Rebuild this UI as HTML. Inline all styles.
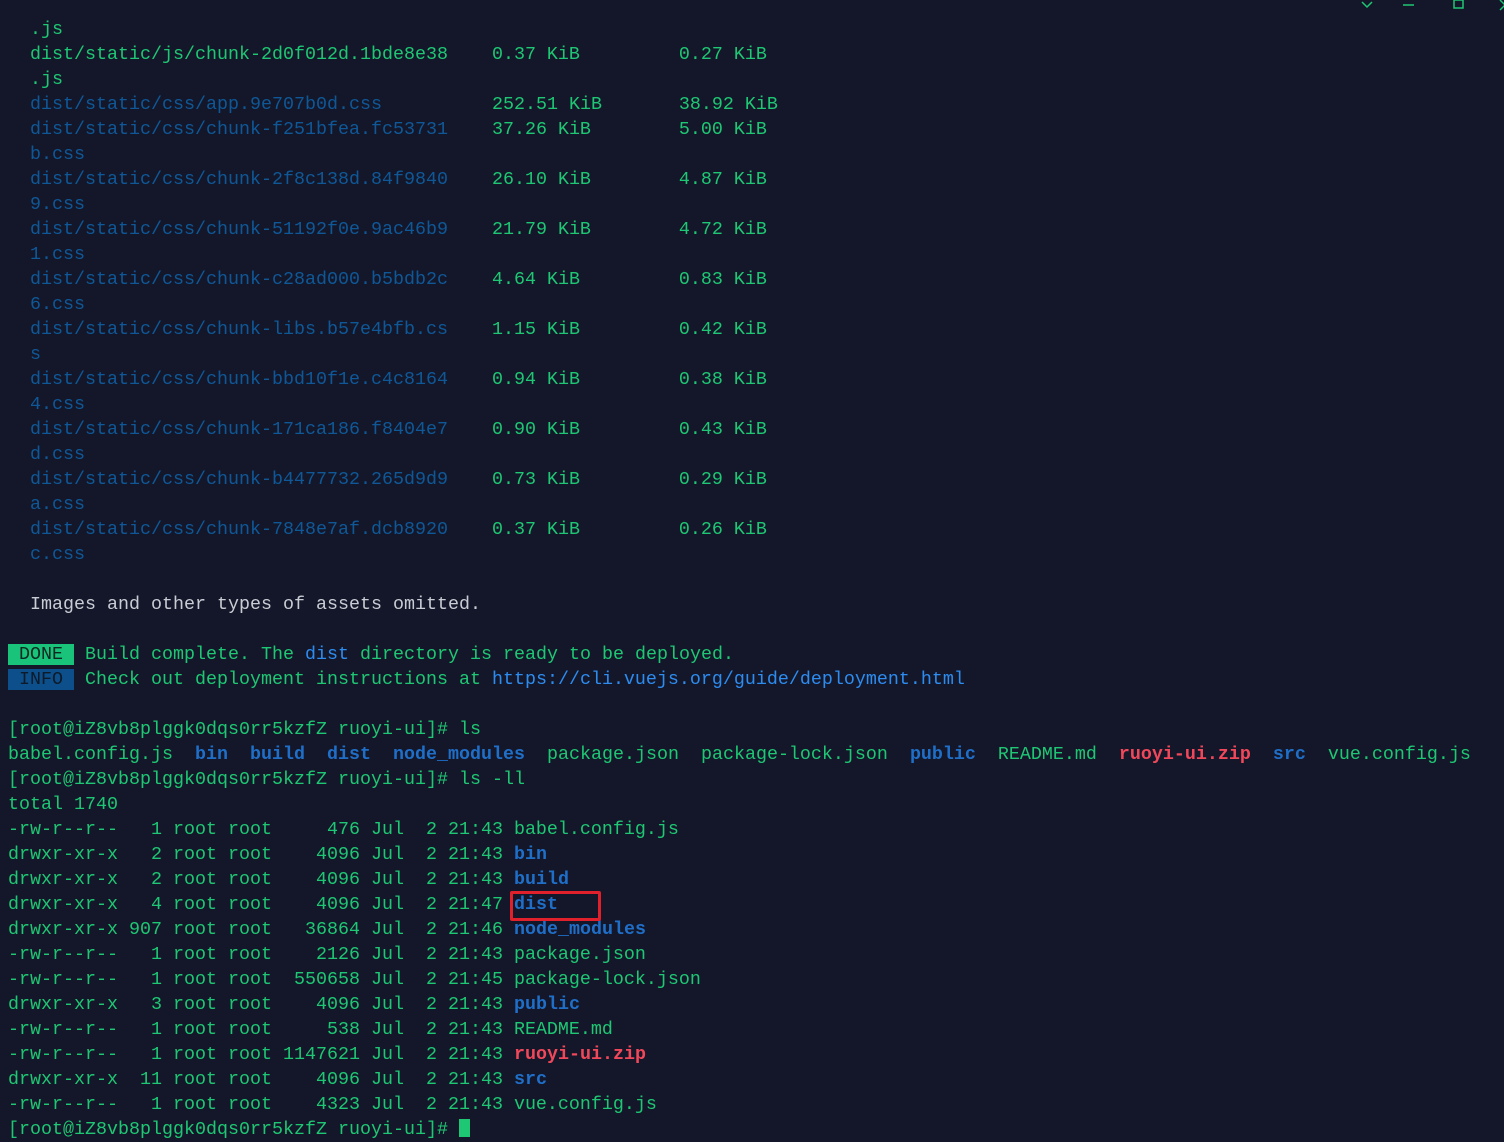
<!DOCTYPE html>
<html><head><meta charset="utf-8"><style>
html,body{margin:0;padding:0;background:#141729;width:1504px;height:1128px;overflow:hidden;}
pre{position:absolute;left:8px;top:17px;margin:0;font-family:"Liberation Mono","DejaVu Sans Mono",monospace;font-size:18.33px;line-height:25px;color:#1ec773;white-space:pre;}
.p{color:#0f5898}
.b{color:#1f6fc9;font-weight:bold}
.r{color:#f0485a;font-weight:bold}
.l{color:#2d8cf0}
.done{background:#19c37a;color:#0d2a22}
.info{background:#0d4f8a;color:#0d1a2a}
.box{position:absolute;left:510px;top:891px;width:85px;height:24px;border:3px solid #e0202a;border-radius:2px;}
.cur{display:inline-block;width:11px;height:18px;background:#1ec773;vertical-align:-3px}
</style></head><body>
<svg style="position:absolute;left:1355px;top:0" width="149" height="12">
<polyline points="7,2 12,7 17,2" fill="none" stroke="#1ec773" stroke-width="1.5"/>
<line x1="48" y1="5" x2="59" y2="5" stroke="#1ec773" stroke-width="1.5"/>
<rect x="99" y="0" width="9" height="8" fill="none" stroke="#1ec773" stroke-width="1.5"/>
<line x1="145" y1="0" x2="150" y2="5" stroke="#1ec773" stroke-width="1.5"/>
<line x1="145" y1="10" x2="150" y2="5" stroke="#1ec773" stroke-width="1.5"/>
</svg>
<pre>  .js
  dist/static/js/chunk-2d0f012d.1bde8e38    0.37 KiB         0.27 KiB
  .js
  <span class="p">dist/static/css/app.9e707b0d.css</span>          252.51 KiB       38.92 KiB
  <span class="p">dist/static/css/chunk-f251bfea.fc53731</span>    37.26 KiB        5.00 KiB
  <span class="p">b.css</span>
  <span class="p">dist/static/css/chunk-2f8c138d.84f9840</span>    26.10 KiB        4.87 KiB
  <span class="p">9.css</span>
  <span class="p">dist/static/css/chunk-51192f0e.9ac46b9</span>    21.79 KiB        4.72 KiB
  <span class="p">1.css</span>
  <span class="p">dist/static/css/chunk-c28ad000.b5bdb2c</span>    4.64 KiB         0.83 KiB
  <span class="p">6.css</span>
  <span class="p">dist/static/css/chunk-libs.b57e4bfb.cs</span>    1.15 KiB         0.42 KiB
  <span class="p">s</span>
  <span class="p">dist/static/css/chunk-bbd10f1e.c4c8164</span>    0.94 KiB         0.38 KiB
  <span class="p">4.css</span>
  <span class="p">dist/static/css/chunk-171ca186.f8404e7</span>    0.90 KiB         0.43 KiB
  <span class="p">d.css</span>
  <span class="p">dist/static/css/chunk-b4477732.265d9d9</span>    0.73 KiB         0.29 KiB
  <span class="p">a.css</span>
  <span class="p">dist/static/css/chunk-7848e7af.dcb8920</span>    0.37 KiB         0.26 KiB
  <span class="p">c.css</span>

  <span style="color:#c8ccd4">Images and other types of assets omitted.</span>

<span class="done"> DONE </span> Build complete. The <span class="l">dist</span> directory is ready to be deployed.
<span class="info"> INFO </span> Check out deployment instructions at <span class="l">https://cli.vuejs.org/guide/deployment.html</span>

[root@iZ8vb8plggk0dqs0rr5kzfZ ruoyi-ui]# ls
babel.config.js  <span class="b">bin</span>  <span class="b">build</span>  <span class="b">dist</span>  <span class="b">node_modules</span>  package.json  package-lock.json  <span class="b">public</span>  README.md  <span class="r">ruoyi-ui.zip</span>  <span class="b">src</span>  vue.config.js
[root@iZ8vb8plggk0dqs0rr5kzfZ ruoyi-ui]# ls -ll
total 1740
-rw-r--r--   1 root root     476 Jul  2 21:43 babel.config.js
drwxr-xr-x   2 root root    4096 Jul  2 21:43 <span class="b">bin</span>
drwxr-xr-x   2 root root    4096 Jul  2 21:43 <span class="b">build</span>
drwxr-xr-x   4 root root    4096 Jul  2 21:47 <span class="b">dist</span>
drwxr-xr-x 907 root root   36864 Jul  2 21:46 <span class="b">node_modules</span>
-rw-r--r--   1 root root    2126 Jul  2 21:43 package.json
-rw-r--r--   1 root root  550658 Jul  2 21:45 package-lock.json
drwxr-xr-x   3 root root    4096 Jul  2 21:43 <span class="b">public</span>
-rw-r--r--   1 root root     538 Jul  2 21:43 README.md
-rw-r--r--   1 root root 1147621 Jul  2 21:43 <span class="r">ruoyi-ui.zip</span>
drwxr-xr-x  11 root root    4096 Jul  2 21:43 <span class="b">src</span>
-rw-r--r--   1 root root    4323 Jul  2 21:43 vue.config.js
[root@iZ8vb8plggk0dqs0rr5kzfZ ruoyi-ui]# <span class="cur"></span></pre>
<div class="box"></div>
</body></html>
